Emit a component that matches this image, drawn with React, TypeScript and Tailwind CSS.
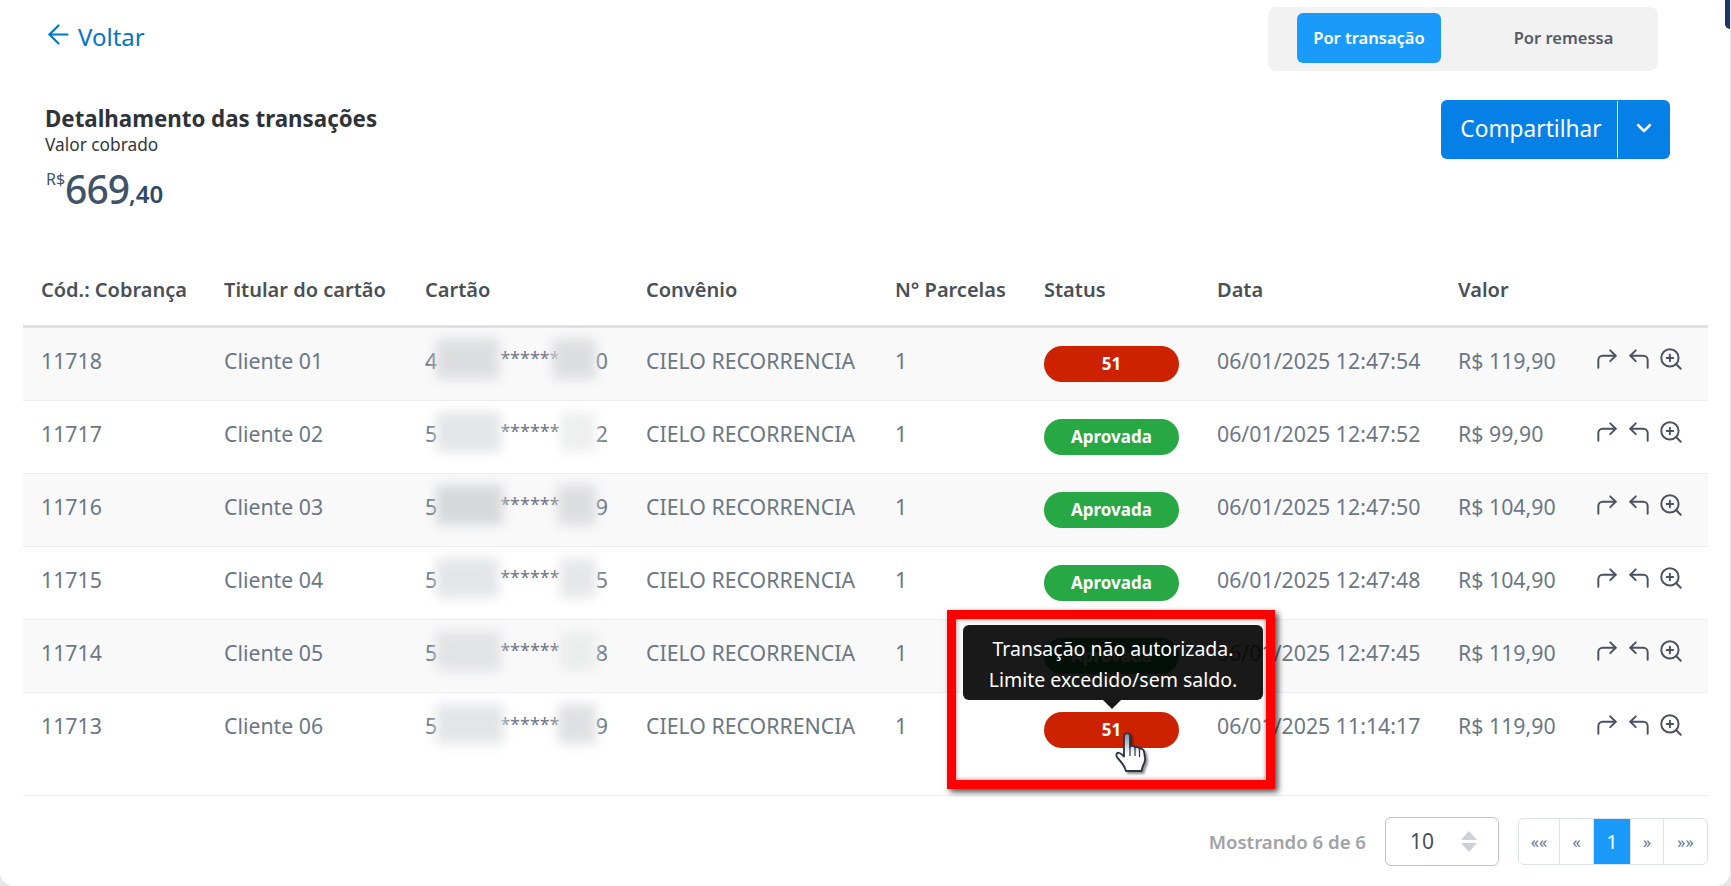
import { ArrowLeft, ChevronDown, CornerUpLeft, CornerUpRight, ZoomIn } from "lucide-react";

const font = "font-['Noto_Sans','Liberation_Sans',sans-serif]";
const gridCols = "grid grid-cols-[183px_201px_221px_249px_149px_173px_241px_139px_129px]";

type Row = {
  cod: string;
  nome: string;
  inicio: string;
  fim: string;
  blurA: string;
  blurB: string;
  status: string;
  data: string;
  valor: string;
  zebra: boolean;
  last?: boolean;
};

const rows: Row[] = [
  { cod: "11718", nome: "Cliente 01", inicio: "4", fim: "0", blurA: "w-[63px] bg-[#dcdddf]", blurB: "w-[43px] bg-[#dcddde]", status: "51", data: "06/01/2025 12:47:54", valor: "R$ 119,90", zebra: true },
  { cod: "11717", nome: "Cliente 02", inicio: "5", fim: "2", blurA: "w-[65px] bg-[#e4e5e7]", blurB: "w-[36px] bg-[#eeefef]", status: "Aprovada", data: "06/01/2025 12:47:52", valor: "R$ 99,90", zebra: false },
  { cod: "11716", nome: "Cliente 03", inicio: "5", fim: "9", blurA: "w-[67px] bg-[#d6d8da]", blurB: "w-[38px] bg-[#dcddde]", status: "Aprovada", data: "06/01/2025 12:47:50", valor: "R$ 104,90", zebra: true },
  { cod: "11715", nome: "Cliente 04", inicio: "5", fim: "5", blurA: "w-[63px] bg-[#e4e5e7]", blurB: "w-[36px] bg-[#e6e7e8]", status: "Aprovada", data: "06/01/2025 12:47:48", valor: "R$ 104,90", zebra: false },
  { cod: "11714", nome: "Cliente 05", inicio: "5", fim: "8", blurA: "w-[65px] bg-[#e2e3e5]", blurB: "w-[36px] bg-[#ebecec]", status: "Aprovada", data: "06/01/2025 12:47:45", valor: "R$ 119,90", zebra: true },
  { cod: "11713", nome: "Cliente 06", inicio: "5", fim: "9", blurA: "w-[68px] bg-[#e4e5e7]", blurB: "w-[38px] bg-[#dfe0e1]", status: "51", data: "06/01/2025 11:14:17", valor: "R$ 119,90", zebra: false, last: true },
];

const headers = ["Cód.: Cobrança", "Titular do cartão", "Cartão", "Convênio", "N° Parcelas", "Status", "Data", "Valor", ""];

function HandCursor() {
  return (
    <svg
      width="33"
      height="42"
      viewBox="0 0 33 42"
      className="absolute left-[159px] top-[113px] drop-shadow-[2px_2px_1px_rgba(0,0,0,0.45)]"
    >
      <defs>
        <linearGradient id="mao" x1="0" y1="0" x2="0" y2="1">
          <stop offset="0" stopColor="#7d8aa0" />
          <stop offset="0.55" stopColor="#ffffff" />
        </linearGradient>
      </defs>
      <path
        d="M11 1.5c2-1 4 0 4 2.5v11c1-1.500 4-1.500 5 .5 1.500-1 4-.5 4.500 1.500 1.500-.7 4-.2 4.500 2.500l1 6c.5 4-1 7-2.500 9.500l-1 4H11l-1.500-4C7 30 4 28 2 25c-1.500-2.500 0-5 2.500-4 1.500.5 3 2 4.500 3.500V4c0-1 .8-2 2-2.500z"
        fill="url(#mao)"
        stroke="#2b3242"
        strokeWidth="1.8"
        strokeLinejoin="round"
      />
      <path d="M15 15v9M20 16v8M24.500 18v7" stroke="#2b3242" strokeWidth="1.200" fill="none" />
    </svg>
  );
}

function StatusBadge({ status }: { status: string }) {
  const aprovada = status === "Aprovada";
  return (
    <span
      className={`mt-[7px] flex h-9 w-[135px] items-center justify-center rounded-full text-[17px] font-bold text-white ${
        aprovada ? "bg-[#28a745]" : "bg-[#cc2200]"
      }`}
    >
      {status}
    </span>
  );
}

function Pager() {
  const cell = "flex h-[45px] items-center justify-center border-r border-[#dee2e6] text-[16px] text-[#5d7290]";
  return (
    <div className="flex h-[47px] items-stretch overflow-hidden rounded-md border border-[#dee2e6]">
      <span className={`${cell} w-[41px]`}>««</span>
      <span className={`${cell} w-[34px]`}>«</span>
      <span className={`${cell} w-[37px] bg-[#1a9bfc] text-[20px] text-white`}>1</span>
      <span className={`${cell} w-[33px]`}>»</span>
      <span className="flex w-[43px] items-center justify-center text-[16px] text-[#5d7290]">»»</span>
    </div>
  );
}

export default function App() {
  return (
    <div className="h-[886px] w-[1731px] bg-[#e4e6e9]">
      <div className={`${font} relative h-[886px] w-[1730px] overflow-hidden rounded-b-[14px] bg-white`}>
        <div className="flex h-[74px] items-start justify-between pl-[43px] pr-[72px] pt-[7px]">
          <a className="mt-[16px] flex items-center gap-[4px] text-[24px] leading-7 text-[#0274c9]">
            <ArrowLeft className="mt-[-6px] h-[31px] w-[31px]" strokeWidth={1.6} />
            Voltar
          </a>
          <div className="flex h-[64px] w-[390px] items-center rounded-lg bg-[#f2f2f2] pb-[2px] pl-[29px]">
            <span className="flex h-[50px] w-[144px] items-center justify-center rounded-md bg-[#1a9bfc] text-[16.5px] font-semibold text-white">
              Por transação
            </span>
            <span className="flex h-[50px] w-[217px] items-center justify-center pl-[28px] text-[16.5px] font-semibold text-[#555a66]">
              Por remessa
            </span>
          </div>
        </div>

        <div className="flex h-[193px] items-start justify-between pl-[45px] pr-[60px] pt-[26px]">
          <div className="pt-[5px]">
            <h1 className="text-[22.3px] font-bold leading-[28px] text-[#2f3338]">Detalhamento das transações</h1>
            <p className="text-[17.3px] leading-[23px] text-[#33373d]">Valor cobrado</p>
            <p className="ml-[1px] mt-[8px] flex items-start text-[#3f5468]">
              <span className="mt-[6px] text-[16px] leading-[18px]">R$</span>
              <span className="text-[39px] font-medium leading-[50px] tracking-[-1px]">669</span>
              <span className="mt-[13px] text-[24px] font-semibold leading-[34px] text-[#2c4a66]">,40</span>
            </p>
          </div>
          <div className="flex h-[59px] w-[229px] items-stretch rounded-md bg-[#0480e6] text-white">
            <span className="flex flex-1 items-center justify-center pl-[4px] text-[22.7px]">Compartilhar</span>
            <span className="my-px w-px bg-white" />
            <span className="flex w-[52px] items-center justify-center pb-[4px]">
              <ChevronDown className="h-6 w-6" strokeWidth={2.5} />
            </span>
          </div>
        </div>

        <div className="mx-[23px] w-[1685px]">
          <div className={`${gridCols} h-[61px] items-center border-b-[3px] border-[#dfe1e3] pb-[12px] pl-[18px] text-[20px] font-semibold text-[#495057]`}>
            {headers.map((h) => (
              <span key={h} className="whitespace-nowrap">{h}</span>
            ))}
          </div>

          {rows.map((row) => (
            <div
              key={row.cod}
              className={`${gridCols} h-[73px] items-center pb-[7px] pl-[18px] text-[21.3px] text-[#6b7785] ${
                row.zebra ? "bg-[#f9f9fa]" : "bg-white"
              } ${row.last ? "" : "border-b border-[#ebedf0]"}`}
            >
              <span>{row.cod}</span>
              <span>{row.nome}</span>
              <span className="relative flex w-[183px] items-center">
                <span>{row.inicio}</span>
                <span className="ml-[63px] pb-[4px] text-[18px]">******</span>
                <span className="ml-auto">{row.fim}</span>
                <span className={`absolute left-[11px] top-[-6px] h-[40px] ${row.blurA} blur-[6px]`} />
                <span className={`absolute right-[12px] top-[-6px] h-[40px] ${row.blurB} blur-[6px]`} />
              </span>
              <span className="whitespace-nowrap">CIELO RECORRENCIA</span>
              <span>1</span>
              <StatusBadge status={row.status} />
              <span className="whitespace-nowrap">{row.data}</span>
              <span className="whitespace-nowrap">{row.valor}</span>
              <span className="ml-[-3px] flex items-center gap-[6px] pb-[3px] text-[#4a5160]">
                <CornerUpRight className="h-[26px] w-[26px]" strokeWidth={1.8} />
                <CornerUpLeft className="h-[26px] w-[26px]" strokeWidth={1.8} />
                <ZoomIn className="h-[26px] w-[26px]" strokeWidth={1.8} />
              </span>
            </div>
          ))}

          <div className="h-[30px] border-b border-[#ebedf0]" />

          <div className="flex items-center justify-end pt-[21px]">
            <span className="text-[18.600px] font-semibold text-[#a0a2a5]">Mostrando 6 de 6</span>
            <div className="ml-[19px] mr-[19px] flex h-[49px] w-[114px] items-center rounded-md border border-[#c0c2cc] pl-[24px] text-[21px] text-[#434f5f]">
              10
              <span className="ml-[27px] flex flex-col gap-[3px]">
                <span className="h-0 w-0 border-x-[8px] border-b-[9px] border-x-transparent border-b-[#cdd0d9]" />
                <span className="h-0 w-0 border-x-[8px] border-t-[9px] border-x-transparent border-t-[#cdd0d9]" />
              </span>
            </div>
            <Pager />
          </div>
        </div>

        {/* canto do menu lateral, fora do card */}
        <div className="absolute right-0 top-0 h-[29px] w-[5px] rounded-bl-[5px] bg-[#1c3566]" />

        {/* destaque do tooltip por cima da tabela */}
        <div className="absolute left-[947px] top-[610px] h-[179px] w-[328px] border-[9px] border-[#ff0000] shadow-[3px_3px_6px_rgba(0,0,0,0.7),inset_0_0_4px_rgba(0,0,0,0.5)]">
          <div className="absolute left-[7px] top-[6px] flex h-[75px] w-[300px] flex-col items-center justify-center rounded-md bg-black/90 pt-[2px] text-[19.500px] leading-[31px] text-white">
            <span>Transação não autorizada.</span>
            <span>Limite excedido/sem saldo.</span>
          </div>
          <span className="absolute left-[147px] top-[81px] h-0 w-0 border-x-[9px] border-t-[9px] border-x-transparent border-t-[#181818]" />
          <HandCursor />
        </div>
      </div>
    </div>
  );
}
